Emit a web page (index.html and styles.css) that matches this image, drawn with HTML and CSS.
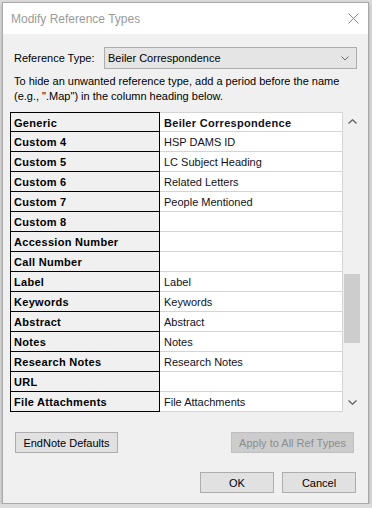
FILE: index.html
```html
<!DOCTYPE html>
<html lang="en">
<head>
    <meta charset="UTF-8">
    <title>Modify Reference Types</title>
    <link rel="stylesheet" href="styles.css">
</head>
<body>
<div class="dialog">
    <div class="titlebar">
        <span class="title">Modify Reference Types</span>
        <svg class="close" width="11" height="11" viewBox="0 0 11 11">
            <path d="M0.5 0.5L10.5 10.5M10.5 0.5L0.5 10.5" stroke="#8a8a8a" stroke-width="1" fill="none"/>
        </svg>
    </div>
    <div class="content">
        <div class="type-row">
            <span class="lbl">Reference Type:</span>
            <div class="combo">
                <span>Beiler Correspondence</span>
                <svg width="8" height="5" viewBox="0 0 8 5">
                    <path d="M0.5 0.5L4 4L7.5 0.5" stroke="#6a6a6a" stroke-width="1" fill="none"/>
                </svg>
            </div>
        </div>
        <p class="hint">To hide an unwanted reference type, add a period before the name<br>(e.g., ".Map") in the column heading below.</p>

        <div class="sheet">
            <div class="grid">
                <div class="key first">Generic</div><div class="val first bold">Beiler Correspondence</div>
                <div class="key">Custom 4</div><div class="val">HSP DAMS ID</div>
                <div class="key">Custom 5</div><div class="val">LC Subject Heading</div>
                <div class="key">Custom 6</div><div class="val">Related Letters</div>
                <div class="key">Custom 7</div><div class="val">People Mentioned</div>
                <div class="key">Custom 8</div><div class="val"></div>
                <div class="key">Accession Number</div><div class="val"></div>
                <div class="key">Call Number</div><div class="val"></div>
                <div class="key">Label</div><div class="val">Label</div>
                <div class="key">Keywords</div><div class="val">Keywords</div>
                <div class="key">Abstract</div><div class="val">Abstract</div>
                <div class="key">Notes</div><div class="val">Notes</div>
                <div class="key">Research Notes</div><div class="val">Research Notes</div>
                <div class="key">URL</div><div class="val"></div>
                <div class="key">File Attachments</div><div class="val">File Attachments</div>
            </div>
            <div class="scrollbar">
                <div class="arrow">
                    <svg width="9" height="5" viewBox="0 0 9 5">
                        <path d="M0.5 4.5L4.5 0.8L8.5 4.5" stroke="#606060" stroke-width="1.3" fill="none"/>
                    </svg>
                </div>
                <div class="track"><div class="thumb"></div></div>
                <div class="arrow">
                    <svg width="9" height="5" viewBox="0 0 9 5">
                        <path d="M0.5 0.5L4.5 4.2L8.5 0.5" stroke="#606060" stroke-width="1.3" fill="none"/>
                    </svg>
                </div>
            </div>
        </div>

        <div class="btn-row">
            <button class="btn wide">EndNote Defaults</button>
            <button class="btn apply" disabled>Apply to All Ref Types</button>
        </div>
        <div class="btn-row end">
            <button class="btn">OK</button>
            <button class="btn">Cancel</button>
        </div>
    </div>
</div>
</body>
</html>
```

FILE: styles.css
```css
*{
    margin: 0;
    padding: 0;
    box-sizing: border-box;
}
body{
    background-color: #dcdcdc;
    padding: 2px 3px 0 2px;
    font-family: "Liberation Sans", Arial, sans-serif;
    font-size: 11px;
    color: #000;
}
.dialog{
    width: 367px;
    height: 502px;
    background-color: #f0f0f0;
    border: 1px solid #a9a9a9;
    box-shadow: 0 2px 4px rgba(0, 0, 0, 0.25);
}
.titlebar{
    height: 31px;
    background-color: #fff;
    display: flex;
    align-items: center;
    justify-content: space-between;
    padding: 0 9px 0 8px;
}
.title{
    font-size: 12px;
    color: #9a9a9a;
}
.content{
    padding: 13px 7px 0 7px;
}
.type-row{
    display: grid;
    grid-template-columns: 90px 1fr;
    align-items: center;
    padding: 0 4px;
}
.combo{
    height: 22px;
    background-color: #e5e5e5;
    border: 1px solid #acacac;
    display: flex;
    align-items: center;
    justify-content: space-between;
    padding: 0 7px 0 3px;
}
.hint{
    margin-top: 5px;
    padding-left: 4px;
    line-height: 15px;
}
.sheet{
    display: flex;
    margin-top: 8px;
    height: 300px;
}
.grid{
    display: grid;
    grid-template-columns: 150px 183px;
    grid-auto-rows: 20px;
}
.key, .val{
    display: flex;
    align-items: center;
    white-space: nowrap;
    overflow: hidden;
    padding-top: 1px;
}
.key{
    font-weight: bold;
    letter-spacing: 0.3px;
    border-left: 1px solid #000;
    border-right: 1px solid #000;
    border-bottom: 1px solid #000;
    padding-left: 3px;
}
.val{
    background-color: #fff;
    border-right: 1px solid #d4d4d4;
    border-bottom: 1px solid #d4d4d4;
    padding-left: 4px;
    color: #111122;
}
.key.first{
    border-top: 1px solid #000;
}
.val.first{
    border-top: 1px solid #d4d4d4;
}
.bold{
    font-weight: bold;
    letter-spacing: 0.3px;
}
.scrollbar{
    width: 18px;
    display: flex;
    flex-direction: column;
}
.arrow{
    height: 19px;
    display: flex;
    align-items: center;
    justify-content: center;
}
.track{
    flex: 1;
    padding: 0 1px;
}
.thumb{
    margin-top: 143px;
    height: 69px;
    background-color: #cdcdcd;
}
.btn-row{
    display: flex;
    justify-content: space-between;
    padding: 0 7px 0 5px;
    margin-top: 20px;
}
.btn-row.end{
    justify-content: flex-end;
    gap: 8px;
    padding-right: 5px;
    margin-top: 19px;
}
.btn{
    height: 21px;
    width: 74px;
    font-family: "Liberation Sans", Arial, sans-serif;
    font-size: 11px;
    color: #000;
    background-color: #e1e1e1;
    border: 1px solid #adadad;
}
.btn.wide{
    width: 103px;
}
.btn.apply{
    width: 123px;
    background-color: #cccccc;
    border-color: #bfbfbf;
    color: #8d8d8d;
}
```
